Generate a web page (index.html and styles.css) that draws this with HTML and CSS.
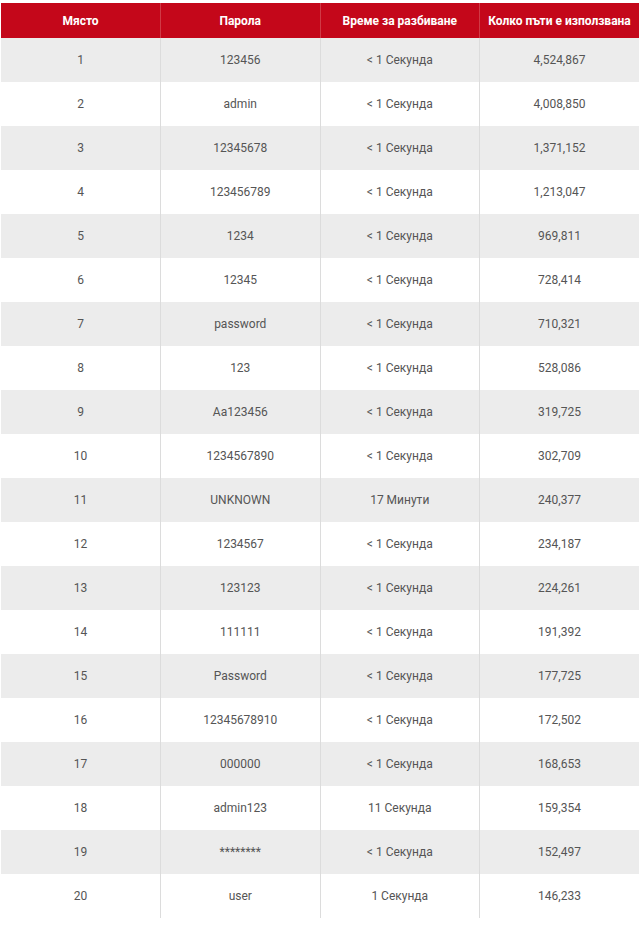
FILE: index.html
```html
<!DOCTYPE html>
<html>
<head>
<meta charset="utf-8">
<link rel="stylesheet" href="styles.css">
</head>
<body>
<table class="pw">
<thead>
<tr><th>Място</th><th>Парола</th><th>Време за разбиване</th><th>Колко пъти е използвана</th></tr>
</thead>
<tbody>
<tr><td>1</td><td>123456</td><td>&lt; 1 Секунда</td><td>4,524,867</td></tr>
<tr><td>2</td><td>admin</td><td>&lt; 1 Секунда</td><td>4,008,850</td></tr>
<tr><td>3</td><td>12345678</td><td>&lt; 1 Секунда</td><td>1,371,152</td></tr>
<tr><td>4</td><td>123456789</td><td>&lt; 1 Секунда</td><td>1,213,047</td></tr>
<tr><td>5</td><td>1234</td><td>&lt; 1 Секунда</td><td>969,811</td></tr>
<tr><td>6</td><td>12345</td><td>&lt; 1 Секунда</td><td>728,414</td></tr>
<tr><td>7</td><td>password</td><td>&lt; 1 Секунда</td><td>710,321</td></tr>
<tr><td>8</td><td>123</td><td>&lt; 1 Секунда</td><td>528,086</td></tr>
<tr><td>9</td><td>Aa123456</td><td>&lt; 1 Секунда</td><td>319,725</td></tr>
<tr><td>10</td><td>1234567890</td><td>&lt; 1 Секунда</td><td>302,709</td></tr>
<tr><td>11</td><td>UNKNOWN</td><td>17 Минути</td><td>240,377</td></tr>
<tr><td>12</td><td>1234567</td><td>&lt; 1 Секунда</td><td>234,187</td></tr>
<tr><td>13</td><td>123123</td><td>&lt; 1 Секунда</td><td>224,261</td></tr>
<tr><td>14</td><td>111111</td><td>&lt; 1 Секунда</td><td>191,392</td></tr>
<tr><td>15</td><td>Password</td><td>&lt; 1 Секунда</td><td>177,725</td></tr>
<tr><td>16</td><td>12345678910</td><td>&lt; 1 Секунда</td><td>172,502</td></tr>
<tr><td>17</td><td>000000</td><td>&lt; 1 Секунда</td><td>168,653</td></tr>
<tr><td>18</td><td>admin123</td><td>11 Секунда</td><td>159,354</td></tr>
<tr><td>19</td><td>********</td><td>&lt; 1 Секунда</td><td>152,497</td></tr>
<tr><td>20</td><td>user</td><td>1 Секунда</td><td>146,233</td></tr>
</tbody>
</table>
</body>
</html>
```
FILE: styles.css
```css
html, body {
  margin: 0;
  padding: 0;
  background: #fff;
}
body {
  padding: 3px 2px 0 1px;
  font-family: Roboto, "Liberation Sans", sans-serif;
}
.pw {
  width: 638px;
  border-collapse: collapse;
  table-layout: fixed;
  font-size: 12px;
  color: #555;
}
.pw th {
  background: #c4071a;
  color: #fff;
  font-weight: 700;
  height: 35px;
  padding: 0;
  text-align: center;
  border-left: 1px solid #d03a46;
}
.pw td {
  height: 44px;
  padding: 0;
  text-align: center;
  border-left: 1px solid #dcdcdc;
}
.pw th:first-child, .pw td:first-child {
  border-left: none;
}
.pw tbody tr:nth-child(odd) td {
  background: #ececec;
}
```
